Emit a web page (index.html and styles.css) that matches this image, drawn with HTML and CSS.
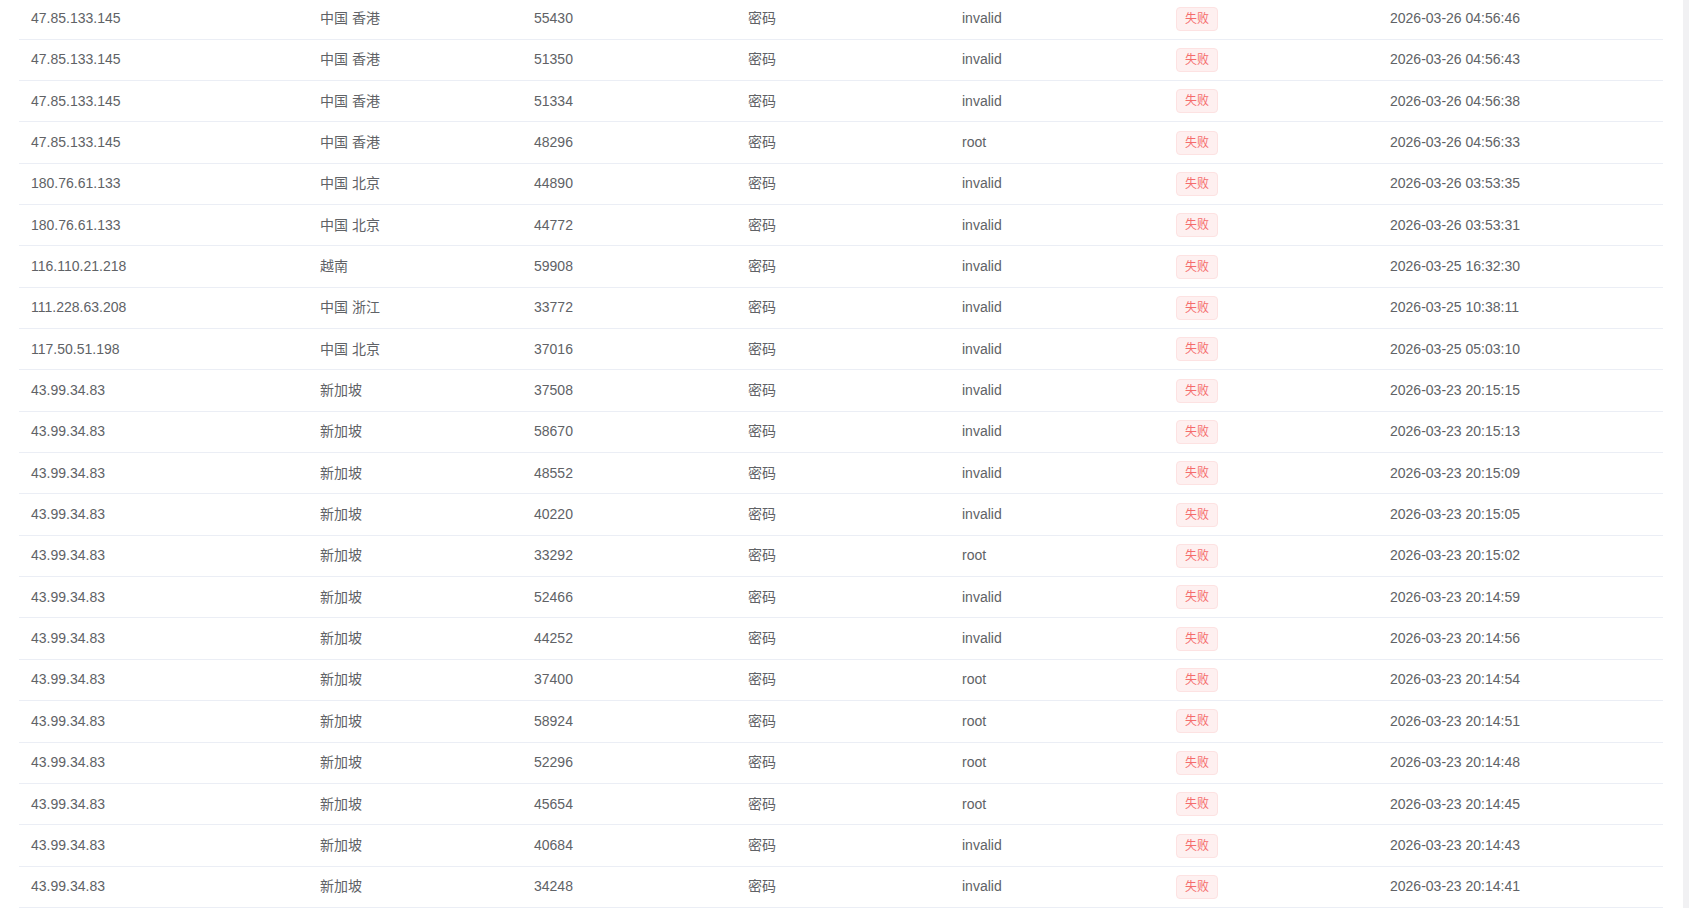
FILE: index.html
```html
<!DOCTYPE html>
<html lang="zh-CN">
<head>
<meta charset="utf-8">
<title>登录日志</title>
<link rel="stylesheet" href="styles.css">
</head>
<body>
<div class="page">
  <div class="content">
    <div class="table" id="table"></div>
  </div>
  <div class="scrollbar"></div>
</div>
<script>
const rows = [
["47.85.133.145","中国 香港","55430","invalid","2026-03-26 04:56:46"],
["47.85.133.145","中国 香港","51350","invalid","2026-03-26 04:56:43"],
["47.85.133.145","中国 香港","51334","invalid","2026-03-26 04:56:38"],
["47.85.133.145","中国 香港","48296","root","2026-03-26 04:56:33"],
["180.76.61.133","中国 北京","44890","invalid","2026-03-26 03:53:35"],
["180.76.61.133","中国 北京","44772","invalid","2026-03-26 03:53:31"],
["116.110.21.218","越南","59908","invalid","2026-03-25 16:32:30"],
["111.228.63.208","中国 浙江","33772","invalid","2026-03-25 10:38:11"],
["117.50.51.198","中国 北京","37016","invalid","2026-03-25 05:03:10"],
["43.99.34.83","新加坡","37508","invalid","2026-03-23 20:15:15"],
["43.99.34.83","新加坡","58670","invalid","2026-03-23 20:15:13"],
["43.99.34.83","新加坡","48552","invalid","2026-03-23 20:15:09"],
["43.99.34.83","新加坡","40220","invalid","2026-03-23 20:15:05"],
["43.99.34.83","新加坡","33292","root","2026-03-23 20:15:02"],
["43.99.34.83","新加坡","52466","invalid","2026-03-23 20:14:59"],
["43.99.34.83","新加坡","44252","invalid","2026-03-23 20:14:56"],
["43.99.34.83","新加坡","37400","root","2026-03-23 20:14:54"],
["43.99.34.83","新加坡","58924","root","2026-03-23 20:14:51"],
["43.99.34.83","新加坡","52296","root","2026-03-23 20:14:48"],
["43.99.34.83","新加坡","45654","root","2026-03-23 20:14:45"],
["43.99.34.83","新加坡","40684","invalid","2026-03-23 20:14:43"],
["43.99.34.83","新加坡","34248","invalid","2026-03-23 20:14:41"]
];
const t = document.getElementById('table');
for (const r of rows) {
  const row = document.createElement('div');
  row.className = 'row';
  row.innerHTML =
    '<div class="cell">' + r[0] + '</div>' +
    '<div class="cell">' + r[1] + '</div>' +
    '<div class="cell">' + r[2] + '</div>' +
    '<div class="cell">密码</div>' +
    '<div class="cell">' + r[3] + '</div>' +
    '<div class="cell"><span class="tag">失败</span></div>' +
    '<div class="cell">' + r[4] + '</div>';
  t.appendChild(row);
}
</script>
</body>
</html>
```

FILE: styles.css
```css
html, body {
  margin: 0;
  padding: 0;
  background: #ffffff;
  overflow: hidden;
}
body {
  font-family: "Liberation Sans", Arial, "Noto Sans CJK SC", sans-serif;
  font-size: 14px;
  color: #606266;
}
.page {
  display: flex;
  height: 908px;
}
.content {
  flex: 1;
  padding: 0 20px 0 19px;
  overflow: hidden;
}
.scrollbar {
  width: 6px;
  background: #f1f1f3;
  flex: none;
}
.table {
  margin-top: -1.7px;
}
.row {
  display: grid;
  grid-template-columns: 289px 214px 214px 214px 214px 214px 1fr;
  height: 41.35px;
  box-sizing: border-box;
  border-bottom: 1px solid #ebeef5;
  align-items: center;
}
.cell {
  padding: 0 12px;
  line-height: 23px;
  white-space: nowrap;
}
.tag {
  display: inline-block;
  box-sizing: border-box;
  height: 24px;
  line-height: 22px;
  padding: 0 8px;
  font-size: 12px;
  color: #f56c6c;
  background: #fef0f0;
  border: 1px solid #fde2e2;
  border-radius: 4px;
  vertical-align: middle;
}
```
